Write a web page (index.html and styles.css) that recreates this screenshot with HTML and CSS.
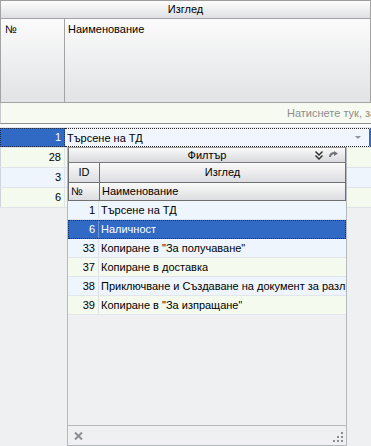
FILE: index.html
```html
<!DOCTYPE html>
<html>
<head>
<meta charset="utf-8">
<link rel="stylesheet" href="styles.css">
</head>
<body>
<div class="grid">
  <div class="hdr band">Изглед</div>
  <div class="hdr cols">
    <div class="c-no">№</div>
    <div class="c-name">Наименование</div>
  </div>
  <div class="filter"><span class="hint">Натиснете тук, за да добавите нов ред</span></div>
  <div class="gap"></div>
  <div class="rows">
    <div class="row blue">
      <div class="num focus">1</div>
      <div class="editor"><span>Търсене на ТД</span><span class="drop"></span></div>
    </div>
    <div class="row green"><div class="num">28</div><div class="cell"></div></div>
    <div class="row blue"><div class="num">3</div><div class="cell"></div></div>
    <div class="row green"><div class="num">6</div><div class="cell"></div></div>
  </div>
</div>

<div class="popup">
  <div class="p-title">
    <span class="p-title-text">Филтър</span>
    <span class="p-icons">
      <svg width="8" height="9" viewBox="0 0 8 9"><path d="M0.5 0.5 L4 4 L7.5 0.5 M0.5 4.5 L4 8 L7.5 4.5" fill="none" stroke="#2a2a2a" stroke-width="1.4"/></svg>
      <svg width="9" height="7" viewBox="0 0 9 7"><path d="M1 6 C1 2.5 3 2 6 2" fill="none" stroke="#6f7378" stroke-width="2"/><path d="M5 0 L9 2.5 L5 5 Z" fill="#6f7378"/></svg>
    </span>
  </div>
  <div class="p-hdr">
    <div class="p-id ctr">ID</div>
    <div class="p-name ctr">Изглед</div>
  </div>
  <div class="p-hdr p-hdr2">
    <div class="p-id">№</div>
    <div class="p-name">Наименование</div>
  </div>
  <div class="p-rows">
    <div class="p-row blue"><div class="p-n">1</div><div class="p-t">Търсене на ТД</div></div>
    <div class="p-row sel"><div class="p-n">6</div><div class="p-t">Наличност</div></div>
    <div class="p-row blue"><div class="p-n">33</div><div class="p-t">Копиране в "За получаване"</div></div>
    <div class="p-row green"><div class="p-n">37</div><div class="p-t">Копиране в доставка</div></div>
    <div class="p-row blue"><div class="p-n">38</div><div class="p-t">Приключване и Създаване на документ за разлики</div></div>
    <div class="p-row green"><div class="p-n">39</div><div class="p-t">Копиране в "За изпращане"</div></div>
  </div>
  <div class="p-foot">
    <svg width="9" height="8" viewBox="0 0 9 8"><path d="M1 0.5 L8 7.5 M8 0.5 L1 7.5" stroke="#8a8d92" stroke-width="2"/></svg>
    <svg class="grip" width="10" height="10" viewBox="0 0 10 10">
      <rect x="8" y="0" width="2" height="2" fill="#8a8d92"/>
      <rect x="4" y="4" width="2" height="2" fill="#8a8d92"/>
      <rect x="8" y="4" width="2" height="2" fill="#8a8d92"/>
      <rect x="0" y="8" width="2" height="2" fill="#8a8d92"/>
      <rect x="4" y="8" width="2" height="2" fill="#8a8d92"/>
      <rect x="8" y="8" width="2" height="2" fill="#8a8d92"/>
    </svg>
  </div>
</div>
</body>
</html>
```
FILE: styles.css
```css
html, body {
  margin: 0;
  padding: 0;
}
body {
  width: 371px;
  height: 446px;
  overflow: hidden;
  background: #eff0f2;
  font-family: "Liberation Sans", Arial, sans-serif;
  font-size: 11px;
  color: #000;
  position: relative;
}
.grid {
  width: 371px;
}
.hdr {
  background: linear-gradient(#fdfdfd, #dfe0e3);
  border: 1px solid #a3a3a3;
  border-top-color: #9c9c9c;
  box-sizing: border-box;
}
.band {
  height: 19px;
  line-height: 17px;
  text-align: center;
}
.cols {
  height: 84px;
  border-top: none;
  display: flex;
  background: linear-gradient(#fbfbfb, #e2e3e6);
}
.c-no {
  width: 64px;
  border-right: 1px solid #a3a3a3;
  padding: 4px 0 0 4px;
  box-sizing: border-box;
}
.c-name {
  flex: 1;
  padding: 4px 0 0 3px;
}
.filter {
  height: 20px;
  background: #f6faf1;
  border-bottom: 1px solid #8e8e8e;
  border-left: 1px solid #c6c9cd;
  line-height: 20px;
  overflow: hidden;
  white-space: nowrap;
  color: #8d8d8d;
}
.hint {
  padding-left: 286px;
}
.gap {
  height: 3px;
  background: #fafbfc;
  border-bottom: 1px solid #e4e6ea;
}
.rows {
  width: 371px;
}
.row {
  display: flex;
  height: 20px;
  box-sizing: border-box;
  border-bottom: 1px solid #e0e4e9;
}
.row.blue { background: #eff5fd; }
.row.green { background: #f5faef; }
.num {
  width: 65px;
  box-sizing: border-box;
  text-align: right;
  padding-right: 3px;
  line-height: 19px;
  border-right: 1px solid #dfe3e8;
  border-left: 1px solid #d0d4da;
}
.num.focus {
  background: #316ac5;
  color: #fff;
  border: 1px dotted #1b2f55;
  line-height: 17px;
}
.cell {
  flex: 1;
}
.editor {
  flex: 1;
  display: flex;
  align-items: center;
  justify-content: space-between;
  background: #f1f6fe;
  border-top: 1px dotted #222;
  border-bottom: 1px dotted #222;
  border-right: 2px solid #316ac5;
  padding-left: 2px;
  padding-right: 8px;
}
.drop {
  width: 0;
  height: 0;
  border-left: 3px solid transparent;
  border-right: 3px solid transparent;
  border-top: 3px solid #8f9298;
}

/* dropdown popup */
.popup {
  position: absolute;
  left: 67px;
  top: 147px;
  width: 280px;
  height: 299px;
  box-sizing: border-box;
  border: 1px solid #b5b8bd;
  border-top: none;
  background: #eff0f2;
  display: flex;
  flex-direction: column;
}
.p-title {
  height: 16px;
  box-sizing: border-box;
  background: linear-gradient(#f9f9f9, #d9dadd);
  border: 1px solid #7a7a7a;
  border-top-color: #9a9a9a;
  display: flex;
  align-items: center;
  position: relative;
  flex: none;
}
.p-title-text {
  flex: 1;
  text-align: center;
  line-height: 14px;
}
.p-icons {
  position: absolute;
  right: 7px;
  top: 3px;
  display: flex;
  gap: 6px;
  align-items: flex-start;
}
.p-hdr {
  display: flex;
  height: 20px;
  box-sizing: border-box;
  background: linear-gradient(#fafafa, #dcdde0);
  border: 1px solid #6f6f6f;
  border-top: none;
  flex: none;
}
.p-hdr2 {
  height: 18px;
}
.p-id {
  width: 31px;
  box-sizing: border-box;
  border-right: 1px solid #6f6f6f;
  padding-left: 2px;
  line-height: 18px;
  flex: none;
}
.p-hdr2 .p-id, .p-hdr2 .p-name {
  line-height: 17px;
}
.p-id.ctr {
  text-align: center;
  padding-left: 0;
}
.p-name {
  flex: 1;
  padding-left: 2px;
  line-height: 18px;
}
.p-name.ctr {
  text-align: center;
  padding-left: 0;
}
.p-rows {
  flex: 1;
}
.p-row {
  display: flex;
  height: 19px;
  box-sizing: border-box;
  border-bottom: 1px solid #e2e6eb;
  line-height: 18px;
  white-space: nowrap;
  overflow: hidden;
}
.p-row.blue { background: #eff5fd; }
.p-row.green { background: #f5faef; }
.p-row.sel {
  background: #316ac5;
  color: #fff;
  border: 1px dotted #1b2f55;
  line-height: 17px;
}
.p-n {
  width: 31px;
  box-sizing: border-box;
  text-align: right;
  padding-right: 3px;
  border-right: 1px solid #dfe3e8;
  flex: none;
}
.p-row.sel .p-n {
  width: 30px;
  border-right-color: #6d93d3;
}
.p-t {
  padding-left: 2px;
  overflow: hidden;
}
.p-foot {
  height: 20px;
  box-sizing: border-box;
  border-top: 1px solid #b5b8bd;
  display: flex;
  align-items: center;
  justify-content: space-between;
  padding: 0 3px 0 6px;
  flex: none;
}
.grip {
  margin-top: 3px;
}
```
